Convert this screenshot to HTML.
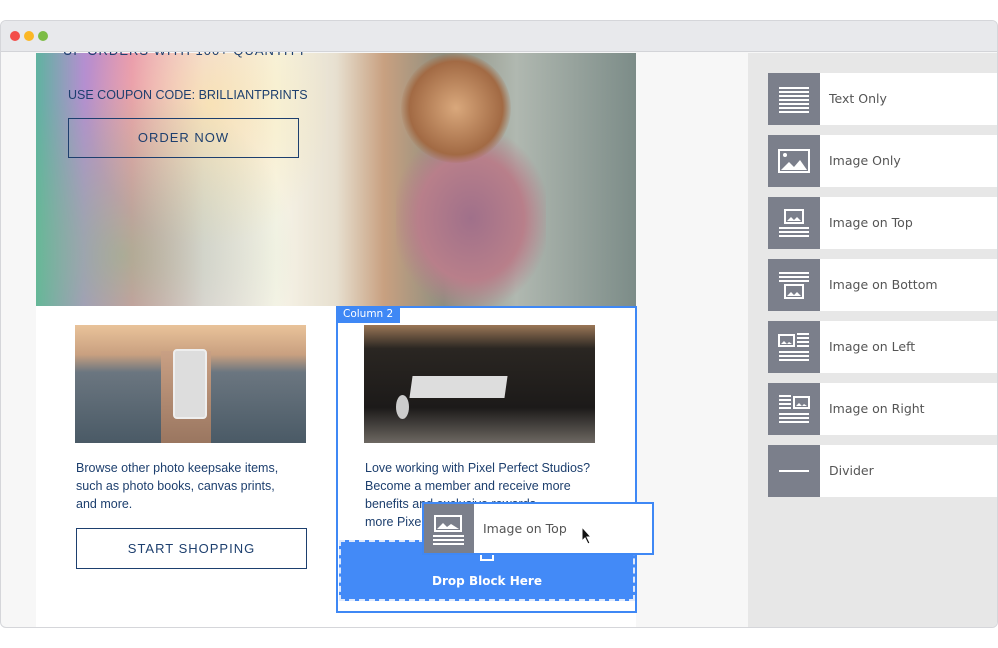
<!DOCTYPE html>
<html><head><meta charset="utf-8"><style>
*{margin:0;padding:0;box-sizing:border-box}
body{width:998px;height:648px;background:#fff;position:relative;overflow:hidden;font-family:"Liberation Sans",sans-serif}
.abs{position:absolute}
.win{left:0;top:20px;width:998px;height:608px;border:1px solid #d5d6da;border-radius:6px;overflow:hidden;background:#f7f7f7}
.bar{left:0;top:0;width:998px;height:31px;background:#e8e9ec;border-bottom:1px solid #d3d4d8;z-index:5}
.dot{width:10px;height:10px;border-radius:50%;top:10px;z-index:6}
.side{left:747px;top:32px;width:251px;height:576px;background:#e7e7e7}
.item{left:20px;width:231px;height:52px;background:#fff}
.ic{left:0;top:0;width:52px;height:52px;background:#7b7f8b}
.item span{position:absolute;left:61px;top:18px;color:#555;font-family:"DejaVu Sans",sans-serif;font-size:12.5px}
.blue{color:#1d3f6e}
.btn{border:1px solid #1d3f6e;color:#1d3f6e;font-size:13px;letter-spacing:1px;text-align:center}
.p{font-size:12.5px;line-height:18px;color:#1d3f6e}
</style></head><body>
<div class="abs win">
 <div class="abs bar"></div>
 <div class="abs dot" style="left:9px;background:#f34e4a"></div>
 <div class="abs dot" style="left:23px;background:#fbb726"></div>
 <div class="abs dot" style="left:37px;background:#7cbc45"></div>
 <div class="abs" style="left:35px;top:32px;width:600px;height:576px;background:#fff"></div>
 <div class="abs" style="left:35px;top:32px;width:600px;height:253px;background:linear-gradient(90deg,#5fb3a0 0%,#b48fd0 8%,#e78fb0 16%,#f3d9e8 28%,#f7f4e8 40%,#e7e0d0 50%,#c8a080 58%,#8e8f80 68%,#b0b8b0 80%,#7c8c88 100%)"></div>
 <div class="abs" style="left:35px;top:32px;width:290px;height:253px;background:radial-gradient(ellipse at 30% 80%,rgba(120,200,120,.5),transparent 60%),radial-gradient(ellipse at 60% 20%,rgba(250,230,150,.6),transparent 50%)"></div>
 <div class="abs" style="left:395px;top:110px;width:150px;height:175px;background:radial-gradient(ellipse,#a0708a,#b87f8a 50%,rgba(180,130,120,0) 75%)"></div>
 <div class="abs" style="left:400px;top:32px;width:110px;height:110px;border-radius:50%;background:radial-gradient(#d9a87c,#a26a44 60%,rgba(160,110,70,0) 72%)"></div>
 <div class="abs blue" style="left:62px;top:22px;font-size:13px;letter-spacing:1px">UP ORDERS WITH 100+ QUANTITY</div>
 <div class="abs blue" style="left:67px;top:67px;font-size:12.5px">USE COUPON CODE: BRILLIANTPRINTS</div>
 <div class="abs btn" style="left:67px;top:97px;width:231px;height:40px;line-height:38px">ORDER NOW</div>
 <div class="abs" style="left:74px;top:304px;width:231px;height:118px;background:linear-gradient(180deg,#e9c39a 0%,#c9a080 25%,#6b7680 40%,#4a5a66 100%)"></div>
 <div class="abs" style="left:160px;top:330px;width:50px;height:92px;background:linear-gradient(#c9a084,#9a7660)"></div>
 <div class="abs" style="left:172px;top:328px;width:34px;height:70px;background:#ddd;border:2px solid #eee;border-radius:4px"></div>
 <div class="abs p" style="left:75px;top:438px">Browse other photo keepsake items,<br>such as photo books, canvas prints,<br>and more.</div>
 <div class="abs btn" style="left:75px;top:507px;width:231px;height:41px;line-height:39px">START SHOPPING</div>
 <div class="abs" style="left:335px;top:285px;width:301px;height:307px;border:2px solid #3f88f5"></div>
 <div class="abs" style="left:335px;top:285px;width:64px;height:17px;background:#3f88f5;color:#fff;line-height:17px;padding-left:7px;font-family:'DejaVu Sans',sans-serif;font-size:10.5px">Column 2</div>
 <div class="abs" style="left:363px;top:304px;width:231px;height:118px;background:linear-gradient(180deg,#9a7656 0%,#2a2622 20%,#1c1a19 70%,#6d6862 100%)"></div>
 <div class="abs" style="left:410px;top:355px;width:95px;height:22px;background:#ddd;transform:skewX(-8deg)"></div>
 <div class="abs" style="left:395px;top:374px;width:13px;height:24px;border-radius:50%;background:#ccc"></div>
 <div class="abs p" style="left:364px;top:438px">Love working with Pixel Perfect Studios?<br>Become a member and receive more<br>benefits and exclusive rewards<br>more Pixel</div>
 <div class="abs" style="left:338px;top:519px;width:296px;height:61px;background:#438af7;border:2px dashed #dfe9fb"></div>
 <div class="abs" style="left:338px;top:553px;width:296px;text-align:center;color:#fff;font-weight:bold;font-size:12px;font-family:'DejaVu Sans',sans-serif">Drop Block Here</div>
 <div class="abs" style="left:479px;top:528px;width:14px;height:12px;border:2px solid #fff;border-top:none"></div>
 <div class="abs" style="left:421px;top:481px;width:232px;height:53px;background:#fff;border:2px solid #3f88f5"></div>
 <div class="abs" style="left:423px;top:483px;width:50px;height:49px;background:#7b7f8b"></div>
 <svg class="abs" style="left:431px;top:493px" width="34" height="32"><rect x="3" y="2" width="26" height="15" fill="none" stroke="#fff" stroke-width="2"/><path d="M5 15l6-6 4 4 4-3 8 5z" fill="#fff"/><rect x="1" y="21" width="31" height="2" fill="#fff"/><rect x="1" y="25" width="31" height="2" fill="#fff"/><rect x="1" y="29" width="31" height="2" fill="#fff"/></svg>
 <div class="abs" style="left:482px;top:500px;font-size:12.5px;color:#555;font-family:'DejaVu Sans',sans-serif">Image on Top</div>
 <svg class="abs" style="left:580px;top:505px" width="12" height="18"><path d="M1 1v14l3-3 3 6 2-1-3-6h4z" fill="#111" stroke="#fff"/></svg>
 <div class="abs side">
  <div class="abs item" style="top:20px"><div class="abs ic"><svg width="52" height="52"><g fill="#fff"><rect x="11" y="14" width="30" height="2"/><rect x="11" y="18" width="30" height="2"/><rect x="11" y="22" width="30" height="2"/><rect x="11" y="26" width="30" height="2"/><rect x="11" y="30" width="30" height="2"/><rect x="11" y="34" width="30" height="2"/><rect x="11" y="38" width="30" height="2"/></g></svg></div><span>Text Only</span></div>
  <div class="abs item" style="top:82px"><div class="abs ic"><svg width="52" height="52"><rect x="11" y="15" width="30" height="22" fill="none" stroke="#fff" stroke-width="2"/><circle cx="17" cy="20" r="2" fill="#fff"/><path d="M13 35l8-8 5 5 6-7 7 10z" fill="#fff"/></svg></div><span>Image Only</span></div>
  <div class="abs item" style="top:144px"><div class="abs ic"><svg width="52" height="52"><rect x="17" y="13" width="18" height="13" fill="none" stroke="#fff" stroke-width="2"/><path d="M19 24l4-4 3 3 3-3 4 4z" fill="#fff"/><g fill="#fff"><rect x="11" y="30" width="30" height="2"/><rect x="11" y="34" width="30" height="2"/><rect x="11" y="38" width="30" height="2"/></g></svg></div><span>Image on Top</span></div>
  <div class="abs item" style="top:206px"><div class="abs ic"><svg width="52" height="52"><g fill="#fff"><rect x="11" y="13" width="30" height="2"/><rect x="11" y="17" width="30" height="2"/><rect x="11" y="21" width="30" height="2"/></g><rect x="17" y="26" width="18" height="13" fill="none" stroke="#fff" stroke-width="2"/><path d="M19 37l4-4 3 3 3-3 4 4z" fill="#fff"/></svg></div><span>Image on Bottom</span></div>
  <div class="abs item" style="top:268px"><div class="abs ic"><svg width="52" height="52"><rect x="11" y="14" width="15" height="11" fill="none" stroke="#fff" stroke-width="2"/><path d="M13 23l3-3 3 3 2-2 3 2z" fill="#fff"/><g fill="#fff"><rect x="29" y="12" width="12" height="2"/><rect x="29" y="16" width="12" height="2"/><rect x="29" y="20" width="12" height="2"/><rect x="29" y="24" width="12" height="2"/><rect x="11" y="30" width="30" height="2"/><rect x="11" y="34" width="30" height="2"/><rect x="11" y="38" width="30" height="2"/></g></svg></div><span>Image on Left</span></div>
  <div class="abs item" style="top:330px"><div class="abs ic"><svg width="52" height="52"><rect x="26" y="14" width="15" height="11" fill="none" stroke="#fff" stroke-width="2"/><path d="M28 23l3-3 3 3 2-2 3 2z" fill="#fff"/><g fill="#fff"><rect x="11" y="12" width="12" height="2"/><rect x="11" y="16" width="12" height="2"/><rect x="11" y="20" width="12" height="2"/><rect x="11" y="24" width="12" height="2"/><rect x="11" y="30" width="30" height="2"/><rect x="11" y="34" width="30" height="2"/><rect x="11" y="38" width="30" height="2"/></g></svg></div><span>Image on Right</span></div>
  <div class="abs item" style="top:392px"><div class="abs ic"><svg width="52" height="52"><rect x="11" y="25" width="30" height="2" fill="#fff"/></svg></div><span>Divider</span></div>
 </div>
</div>
</body></html>
